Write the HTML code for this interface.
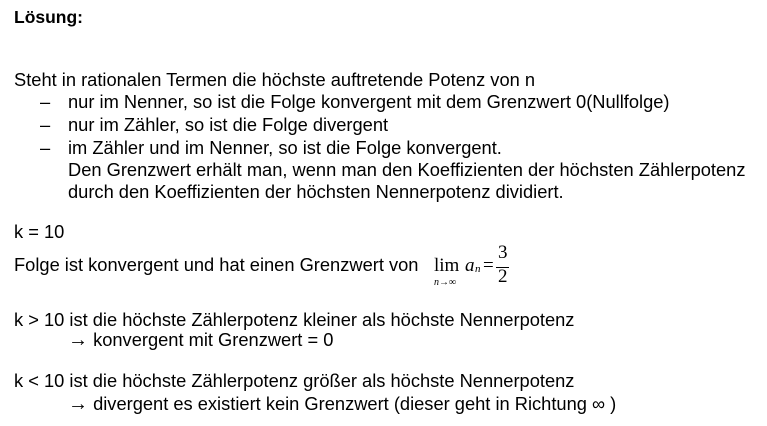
<!DOCTYPE html>
<html><head><meta charset="utf-8"><style>
body{margin:0;width:767px;height:426px;background:#fff;overflow:hidden;font-family:"Liberation Sans",Arial,sans-serif;font-size:18.3px;color:#000;position:relative}
.l{position:absolute;left:14px;line-height:20px;white-space:nowrap}
.i{left:68px}
.a{font-size:20px}
</style></head><body>
<div class="l" style="top:7px;font-weight:bold;font-size:17.5px">Lösung:</div>
<div class="l" style="top:70px">Steht in rationalen Termen die höchste auftretende Potenz von n</div>
<div class="l" style="top:92px;left:40px">–</div><div class="l i" style="top:92px">nur im Nenner, so ist die Folge konvergent mit dem Grenzwert 0(Nullfolge)</div>
<div class="l" style="top:115px;left:40px">–</div><div class="l i" style="top:115px">nur im Zähler, so ist die Folge divergent</div>
<div class="l" style="top:138px;left:40px">–</div><div class="l i" style="top:138px">im Zähler und im Nenner, so ist die Folge konvergent.</div>
<div class="l i" style="top:160px">Den Grenzwert erhält man, wenn man den Koeffizienten der höchsten Zählerpotenz</div>
<div class="l i" style="top:182px">durch den Koeffizienten der höchsten Nennerpotenz dividiert.</div>
<div class="l" style="top:222px">k = 10</div>
<div class="l" style="top:255px">Folge ist konvergent und hat einen Grenzwert von</div>
<div style="position:absolute;left:434px;top:244px;font-family:'Liberation Serif',serif;font-size:19px;width:90px;height:45px">
 <span style="position:absolute;left:0;top:11px">lim</span>
 <span style="position:absolute;left:0;top:33px;font-size:10px;font-style:italic">n→∞</span>
 <span style="position:absolute;left:31px;top:11px;font-style:italic">a</span>
 <span style="position:absolute;left:41px;top:19px;font-size:11px;font-style:italic">n</span>
 <span style="position:absolute;left:49px;top:11px">=</span>
 <span style="position:absolute;left:64px;top:-2px">3</span>
 <span style="position:absolute;left:62px;top:23px;width:13px;border-top:1px solid #000"></span>
 <span style="position:absolute;left:64px;top:22px">2</span>
</div>
<div class="l" style="top:310px">k &gt; 10 ist die höchste Zählerpotenz kleiner als höchste Nennerpotenz</div>
<div class="l i" style="top:330px"><span class="a">→</span> konvergent mit Grenzwert = 0</div>
<div class="l" style="top:371px">k &lt; 10 ist die höchste Zählerpotenz größer als höchste Nennerpotenz</div>
<div class="l i" style="top:394px"><span class="a">→</span> divergent es existiert kein Grenzwert (dieser geht in Richtung ∞ )</div>
</body></html>
